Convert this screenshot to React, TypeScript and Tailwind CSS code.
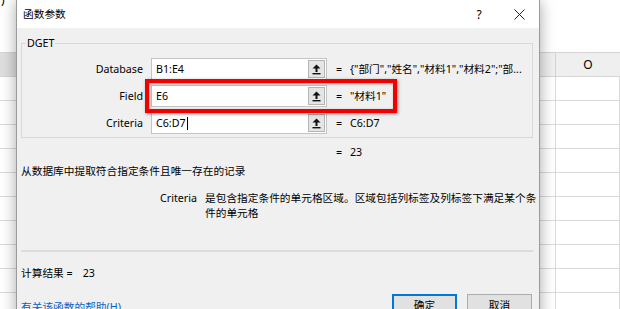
import React from 'react'

const rows = Array.from({ length: 10 })

function RefButton() {
  return (
    <div className="my-px mr-px flex w-[17px] items-center justify-center border border-[#b4b4b4] bg-[#e5e5e5]">
      <svg width="9" height="11" viewBox="0 0 9 11">
        <path d="M4.5 0.5 L8.5 4.5 H0.5 Z" fill="#111" />
        <rect x="3.5" y="4" width="2" height="4" fill="#111" />
        <rect x="0.5" y="9" width="8" height="1.4" fill="#111" />
      </svg>
    </div>
  )
}

function ArgRow(props: {
  label: string
  value: string
  result: string
  cursor?: boolean
}) {
  return (
    <div className="flex h-[22px] items-center">
      <div className="w-[121px] text-right">{props.label}</div>
      <div className="ml-[8px] flex h-full w-[176px] border border-[#c4c4c4] bg-white">
        <div className="flex flex-1 items-center pl-[4px]">
          {props.value}
          {props.cursor ? (
            <span className="ml-px h-[13px] w-px bg-black" />
          ) : null}
        </div>
        <RefButton />
      </div>
      <div className="ml-[9px] w-[14px]">=</div>
      <div className="w-[172px] overflow-hidden whitespace-nowrap">
        {props.result}
      </div>
    </div>
  )
}

export default function App() {
  return (
    <div className="relative h-[309px] w-[620px] overflow-hidden bg-white font-['Noto_Sans','Noto_Sans_CJK_SC',sans-serif] text-[10.7px] leading-[15px] text-black">
      {/* spreadsheet behind the dialog */}
      <div className="flex h-[52px] items-start pl-px">
        <span className="-mt-[8px] text-[12px]">)</span>
      </div>
      <div className="flex h-[25px] border-y border-[#d4d4d4] bg-[#efefef]">
        <div className="w-[16px] bg-[#dedede]" />
        <div className="w-[488px]" />
        <div className="flex w-[66px] items-center justify-center border-r border-[#d4d4d4] text-[12px]">
          N
        </div>
        <div className="flex w-[66px] items-center justify-center text-[12px]">
          O
        </div>
      </div>
      {rows.map((_, i) => (
        <div key={i} className="flex h-[24px] border-b border-[#dadada]">
          <div className="w-[570px] border-r border-[#dadada]" />
          <div className="w-[66px] border-r border-[#dadada]" />
        </div>
      ))}

      {/* dialog window */}
      <div className="absolute left-[16px] top-[-1px] flex h-[330px] w-[524px] flex-col border border-[#9a9a9a] bg-[#f0f0f0] shadow-[0_2px_14px_rgba(0,0,0,0.35)]">
        <div className="flex h-[28px] shrink-0 items-center bg-white pl-[6px] pt-px">
          <span>函数参数</span>
          <span className="ml-auto w-[20px] text-center text-[12px]">?</span>
          <span className="ml-[20px] flex w-[20px] justify-center">
            <svg width="11" height="11" viewBox="0 0 11 11">
              <path d="M0.5 0.5 L10.5 10.5 M10.5 0.5 L0.5 10.5" stroke="#222" strokeWidth="1" />
            </svg>
          </span>
          <span className="w-[10px]" />
        </div>

        <div className="flex flex-col pl-[4px] pr-[6px]">
          <fieldset className="mt-[8px] border border-[#d8d8d8] pb-[3px]">
            <legend className="ml-[4px] px-px leading-[14px]">DGET</legend>
            <div className="mt-[8px] flex flex-col gap-[5px]">
              <ArgRow
                label="Database"
                value="B1:E4"
                result={'{"部门","姓名","材料1","材料2";"部...'}
              />
              <ArgRow label="Field" value="E6" result={'"材料1"'} />
              <ArgRow label="Criteria" value="C6:D7" result="C6:D7" cursor />
            </div>
          </fieldset>

          <div className="mt-[7px] flex">
            <div className="ml-[315px] w-[14px]">=</div>
            <div>23</div>
          </div>

          <div className="mt-[4px]">从数据库中提取符合指定条件且唯一存在的记录</div>

          <div className="mt-[12px] flex">
            <div className="w-[176px] shrink-0 text-right">Criteria</div>
            <div className="ml-[8px] w-[334px] shrink-0">
              是包含指定条件的单元格区域。区域包括列标签及列标签下满足某个条件的单元格
            </div>
          </div>

          <div className="mt-[29px] border-t-2 border-[#dcdcdc]" />

          <div className="mt-[14px] flex">
            <span>计算结果 =</span>
            <span className="ml-[10px]">23</span>
          </div>

          <div className="mt-[13px] flex items-start">
            <span className="mt-[6px] text-[#0066cc]">有关该函数的帮助(H)</span>
            <div className="ml-auto flex gap-[10px] pr-px">
              <div className="flex h-[23px] w-[65px] items-center justify-center border-2 border-[#0078d7] bg-[#e1e1e1]">
                确定
              </div>
              <div className="flex h-[23px] w-[65px] items-center justify-center border border-[#adadad] bg-[#e1e1e1]">
                取消
              </div>
            </div>
          </div>
        </div>

        {/* red highlight around the Field row */}
        <div className="absolute left-[128px] top-[79px] h-[34px] w-[252px] border-[4px] border-[#f20000] shadow-[1px_1px_3px_rgba(0,0,0,0.45),inset_1px_1px_3px_rgba(0,0,0,0.35)]" />
      </div>
    </div>
  )
}
